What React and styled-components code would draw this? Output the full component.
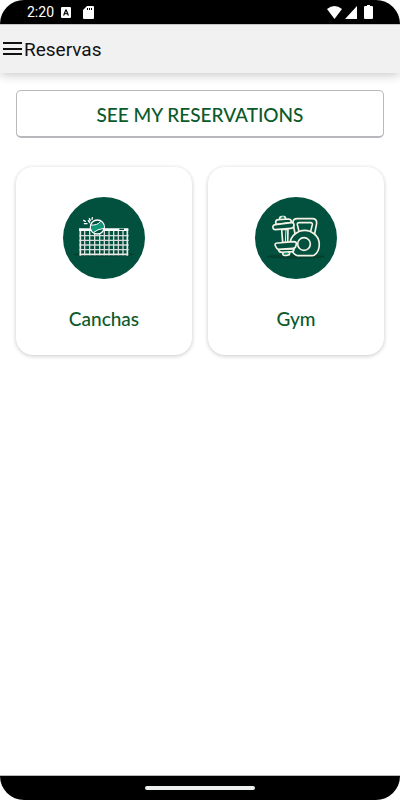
import React from 'react';

import styled, { createGlobalStyle } from 'styled-components';


const GlobalStyle = createGlobalStyle`
  * {
    box-sizing: border-box;
  }

  body {
    margin: 0;
    background: #fff;
  }
`;

const Screen = styled.div`
  min-height: 100vh;
  display: flex;
  flex-direction: column;
  background: #fff;
  font-family: Lato, sans-serif;
`;

const StatusBar = styled.div`
  height: 24px;
  padding: 0 27px;
  display: flex;
  align-items: center;
  justify-content: space-between;
  background: #000;
  color: #fff;
  border-radius: 24px 24px 0 0;
`;

const StatusGroup = styled.div`
  display: flex;
  align-items: center;
  gap: ${({ $gap }) => $gap}px;
`;

const Time = styled.span`
  font-family: Roboto, sans-serif;
  font-size: 14px;
  line-height: 24px;
`;

const StatusIcon = styled.svg`
  display: block;
  fill: currentColor;
`;

const SdIcon = styled(StatusIcon)`
  margin-left: 5px;
`;

const BatteryIcon = styled(StatusIcon)`
  margin-left: 4px;
`;

const Header = styled.header`
  height: 49px;
  padding: 0 2px;
  display: flex;
  align-items: center;
  gap: 2px;
  background: #f1f1f1;
  border-top: 1px solid #c4c4c4;
  box-shadow: 0 2px 10px rgba(0, 0, 0, 0.22);
`;

const MenuButton = styled.button`
  width: 20px;
  height: 24px;
  padding: 0;
  border: 0;
  background: none;
  cursor: pointer;
`;

const MenuIcon = styled.svg`
  display: block;
  width: 20px;
  height: 24px;
  stroke: #111;
  stroke-width: 2;
`;

const Title = styled.h1`
  margin: 0;
  padding-top: 2px;
  font-family: Roboto, sans-serif;
  font-size: 19px;
  font-weight: 400;
  line-height: 24px;
  color: #111;
`;

const Content = styled.main`
  flex: 1;
  padding: 17px 16px;
`;

const ReservationsButton = styled.button`
  width: 100%;
  height: 48px;
  padding: 2px 0 0;
  border: 1px solid #b9b9bd;
  border-bottom-width: 2px;
  border-radius: 5px;
  background: #fff;
  color: #0b5a2b;
  font-family: inherit;
  font-size: 19px;
  font-weight: 500;
  line-height: 24px;
  cursor: pointer;
`;

const Cards = styled.div`
  margin-top: 29px;
  display: grid;
  grid-template-columns: 1fr 1fr;
  gap: 16px;
`;

const Card = styled.button`
  height: 188px;
  padding: 30px 16px 24px;
  display: flex;
  flex-direction: column;
  align-items: center;
  justify-content: space-between;
  border: 0;
  border-radius: 17px;
  background: #fff;
  box-shadow: 0 1px 4px rgba(0, 0, 0, 0.22);
  color: #0b5a2b;
  font-family: inherit;
  cursor: pointer;
`;

const CardImage = styled.svg`
  display: block;
  width: 82px;
  height: 82px;
`;

const CardText = styled.span`
  font-size: 19px;
  font-weight: 500;
  line-height: 24px;
`;

const NavigationBar = styled.footer`
  height: 25px;
  display: flex;
  align-items: center;
  justify-content: center;
  background: #000;
  border-top: 1px solid #b5bab8;
  border-radius: 0 0 24px 24px;
`;

const HomeHandle = styled.div`
  width: 110px;
  height: 4px;
  border-radius: 2px;
  background: #eef0ef;
`;


const NET_COLUMNS = [92, 107, 122, 137, 151, 165, 179, 193, 207];
const NET_ROWS = [143, 157, 171, 185];

const CourtPicture = () => (
  <CardImage viewBox="27 27 246 246" fill="none" aria-hidden="true">
    <circle cx="150" cy="150" r="123" fill="#02513f" />
    <ellipse cx="149" cy="199" rx="93" ry="7" fill="#06402f" />
    <g stroke="#d5dcd9" strokeWidth="4">
      {NET_COLUMNS.map((x) => (
        <path key={x} d={`M${x} 128V202`} />
      ))}
      {NET_ROWS.map((y) => (
        <path key={y} d={`M76 ${y}H224`} />
      ))}
    </g>
    <path d="M79 122V203M220 122V203M76 199H223" stroke="#e6ebe8" strokeWidth="5" />
    <path d="M75 125H223" stroke="#fff" strokeWidth="8" />
    <path d="M196 124H210" stroke="#02513f" strokeWidth="4" />
    <circle cx="130" cy="117" r="21" fill="#02513f" stroke="#fff" strokeWidth="4" />
    <path d="M111 111Q130 112 140 101Q148 107 150 120Q132 124 119 134Q111 126 111 111Z" fill="#10977a" />
    <path d="M110 111Q130 113 140 100M118 134Q130 123 150 121" stroke="#fff" strokeWidth="3" />
    <path d="M89 97L94 100M99 107L91 107M106 92L109 98M103 98L107 104M115 89L114 94" stroke="#fff" strokeWidth="4" strokeLinecap="round" />
  </CardImage>
);

const GymPicture = () => (
  <CardImage viewBox="27 27 246 246" fill="none" aria-hidden="true">
    <circle cx="150" cy="150" r="123" fill="#02513f" />
    <ellipse cx="149" cy="206" rx="88" ry="7" fill="#06402f" />
    <g stroke="#f5f3e6" strokeWidth="5" strokeLinejoin="round" fill="#02513f">
      <path d="M148 142L141 106Q139 92 154 92H199Q213 92 212 106L205 142Z" />
      <path d="M160 134L154 110Q153 104 160 104H194Q200 104 199 110L193 134Z" />
      <path d="M151 202C127 188 127 153 147 138Q160 127 176 127Q192 127 205 138C225 153 225 188 204 202Q202 203 199 203H155Q153 203 151 202Z" />
      <circle cx="174" cy="168" r="19" />
      <path d="M107 124L110 164H125L126 124Z" />
      <path d="M120 124L118 164" strokeWidth="3" />
      <path d="M101 94V90Q102 86 107 86H114Q119 86 119 94" />
      <path d="M89 103Q89 95 97 95L128 93Q137 94 136 104L91 110Z" />
      <path d="M81 120Q79 112 88 110L135 104Q144 103 144 111L142 118Q140 121 134 121L88 125Q82 125 81 120Z" />
      <path d="M110 192L111 200Q112 203 121 202L130 200L131 191Z" />
      <path d="M97 183L98 188Q100 193 108 193L138 191Q144 190 144 182Z" />
      <path d="M90 177L87 171Q87 164 96 165L143 161Q152 161 151 168L149 176Q147 181 141 181L98 184Q92 183 90 177Z" />
    </g>
    <path d="M107 88H114M115 197L126 196" stroke="#10977a" strokeWidth="5" />
  </CardImage>
);


const activities = [
  { name: 'Canchas', Picture: CourtPicture },
  { name: 'Gym', Picture: GymPicture },
];

export default function App() {
  return (
    <Screen>
      <GlobalStyle />

      <StatusBar>
        <StatusGroup $gap={7}>
          <Time>2:20</Time>
          <StatusIcon width="10" height="11" viewBox="0 0 10 11" aria-hidden="true">
            <path fillRule="evenodd" d="M1 0H9Q10 0 10 1V10Q10 11 9 11H1Q0 11 0 10V1Q0 0 1 0ZM4.3 2.5L2 8.5H3.3L3.8 7.2H6.2L6.7 8.5H8L5.7 2.5ZM5 4L5.8 6.2H4.2Z" />
          </StatusIcon>
          <SdIcon width="11" height="13" viewBox="0 0 11 13" aria-hidden="true">
            <path fillRule="evenodd" d="M4 0H10Q11 0 11 1V12Q11 13 10 13H1Q0 13 0 12V4ZM4 2V4H5V2ZM6 2V4H7V2ZM8 2V4H9V2Z" />
          </SdIcon>
        </StatusGroup>
        <StatusGroup $gap={3}>
          <StatusIcon width="15" height="13" viewBox="0 0 15 13" aria-hidden="true">
            <path d="M0 3Q7.5 -3 15 3L7.5 13Z" />
          </StatusIcon>
          <StatusIcon width="12" height="13" viewBox="0 0 12 13" aria-hidden="true">
            <path d="M12 0V13H0Z" />
          </StatusIcon>
          <BatteryIcon width="9" height="14" viewBox="0 0 9 14" aria-hidden="true">
            <path d="M3 0H6V1H8Q9 1 9 2V13Q9 14 8 14H1Q0 14 0 13V2Q0 1 1 1H3Z" />
          </BatteryIcon>
        </StatusGroup>
      </StatusBar>

      <Header>
        <MenuButton type="button" aria-label="Menu">
          <MenuIcon viewBox="0 0 20 24" aria-hidden="true">
            <path d="M1 6H20M1 12H20M1 17H20" />
          </MenuIcon>
        </MenuButton>
        <Title>Reservas</Title>
      </Header>

      <Content>
        <ReservationsButton type="button">SEE MY RESERVATIONS</ReservationsButton>

        <Cards>
          {activities.map(({ name, Picture }) => (
            <Card type="button" key={name}>
              <Picture />
              <CardText>{name}</CardText>
            </Card>
          ))}
        </Cards>
      </Content>

      <NavigationBar>
        <HomeHandle />
      </NavigationBar>
    </Screen>
  );
}
